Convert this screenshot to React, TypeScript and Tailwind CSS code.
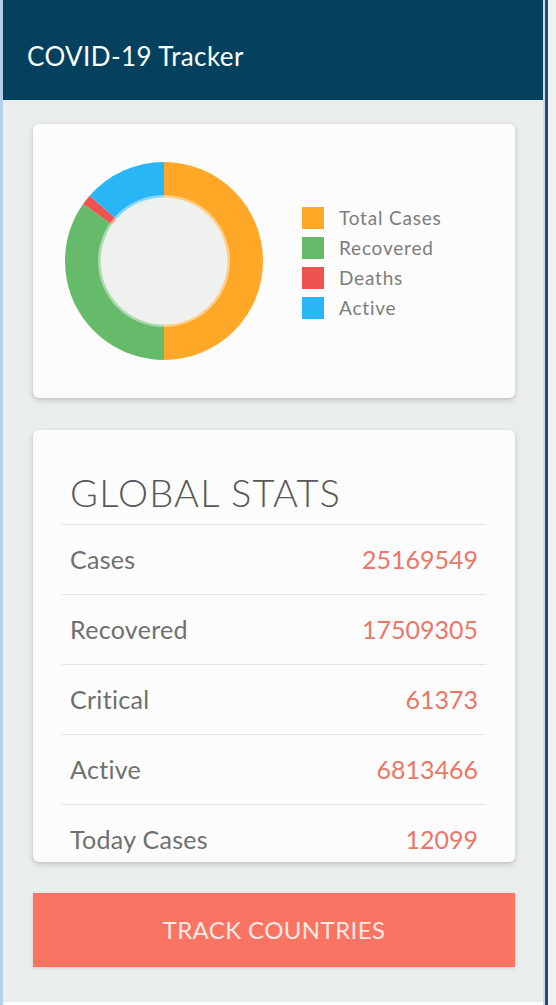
const chartData = [
  { label: 'Total Cases', value: 25169549, color: '#FFA726' },
  { label: 'Recovered', value: 17509305, color: '#66BB6A' },
  { label: 'Deaths', value: 846778, color: '#EF5350' },
  { label: 'Active', value: 6813466, color: '#29B6F6' },
];

const stats = [
  { label: 'Cases', value: '25169549' },
  { label: 'Recovered', value: '17509305' },
  { label: 'Critical', value: '61373' },
  { label: 'Active', value: '6813466' },
  { label: 'Today Cases', value: '12099' },
];

const polar = (cx: number, cy: number, r: number, deg: number) => {
  const a = ((deg - 90) * Math.PI) / 180;
  return [cx + r * Math.cos(a), cy + r * Math.sin(a)];
};

const arcPath = (start: number, end: number, ro: number, ri: number) => {
  const c = 100;
  const [x1, y1] = polar(c, c, ro, start);
  const [x2, y2] = polar(c, c, ro, end);
  const [x3, y3] = polar(c, c, ri, end);
  const [x4, y4] = polar(c, c, ri, start);
  const large = end - start > 180 ? 1 : 0;
  return `M${x1} ${y1} A${ro} ${ro} 0 ${large} 1 ${x2} ${y2} L${x3} ${y3} A${ri} ${ri} 0 ${large} 0 ${x4} ${y4} Z`;
};

const Donut = () => {
  const total = chartData.reduce((s, d) => s + d.value, 0);
  let angle = 0;
  return (
    <svg width="200" height="200" viewBox="0 0 200 200">
      {chartData.map((d) => {
        const sweep = (d.value / total) * 360;
        const path = arcPath(angle, angle + sweep, 99, 40);
        angle += sweep;
        return <path key={d.label} d={path} fill={d.color} />;
      })}
      <circle cx="100" cy="100" r="66" fill="#ffffff" fillOpacity="0.45" />
      <circle cx="100" cy="100" r="63.5" fill="#eff1ef" />
    </svg>
  );
};

export default function App() {
  return (
    <div
      className="flex w-[556px] h-[1005px] overflow-hidden bg-white"
      style={{ fontFamily: 'Lato, "Open Sans", sans-serif' }}
    >
      <div className="w-[3px] bg-[#b4d0ec]" />
      <div className="flex flex-col w-[540px] bg-[#e9eeec]">
        <header className="h-[100px] bg-[#03415f] flex items-end pb-[31px] pl-[24px]">
          <h1 className="text-white text-[26px] leading-none tracking-[0.4px]">COVID-19 Tracker</h1>
        </header>

        <main className="flex flex-col pl-[30px] pr-[28px] pt-[24px] h-[902px]">
          <section className="h-[274px] bg-[#fbfcfb] rounded-md shadow-[0_2px_5px_rgba(0,0,0,0.2)] flex items-center pl-[31px]">
            <Donut />
            <ul className="ml-[38px] flex flex-col gap-[8px] pt-[4px]">
              {chartData.map((d) => (
                <li key={d.label} className="flex items-center h-[22px]">
                  <span className="w-[22px] h-[22px]" style={{ backgroundColor: d.color }} />
                  <span className="ml-[15px] text-[19px] tracking-[0.8px] text-[#7d7d7d]">{d.label}</span>
                </li>
              ))}
            </ul>
          </section>

          <section className="mt-[32px] h-[432px] bg-[#fbfcfb] rounded-md shadow-[0_2px_5px_rgba(0,0,0,0.2)] overflow-hidden px-[29px] pt-[30px]">
            <div className="h-[65px] flex items-center px-[8px] border-b border-[#e3e6e4]">
              <h2 className="text-[38px] font-light tracking-[1.2px] text-[#575757] leading-none">GLOBAL STATS</h2>
            </div>
            {stats.map((s) => (
              <div
                key={s.label}
                className="h-[70px] flex items-center justify-between px-[8px] border-b border-[#e3e6e4]"
              >
                <span className="text-[25px] tracking-[0.3px] text-[#6f6f6f]">{s.label}</span>
                <span className="text-[25px] text-[#e9776a]">{s.value}</span>
              </div>
            ))}
          </section>

          <button className="mt-[31px] h-[74px] bg-[#fa7463] text-[#fde9e4] text-[24px] tracking-[0.4px] shadow-[0_1px_3px_rgba(0,0,0,0.15)]">
            TRACK COUNTRIES
          </button>
        </main>
        <div className="h-[3px] bg-white" />
      </div>
      <div className="flex w-[13px] bg-[#e9eeec]">
        <div className="w-[2px] bg-[#d7dbd9]" />
        <div className="w-[3px] bg-[#1d4f7e]" />
        <div className="flex-1 bg-[#eef2f1]" />
      </div>
    </div>
  );
}
